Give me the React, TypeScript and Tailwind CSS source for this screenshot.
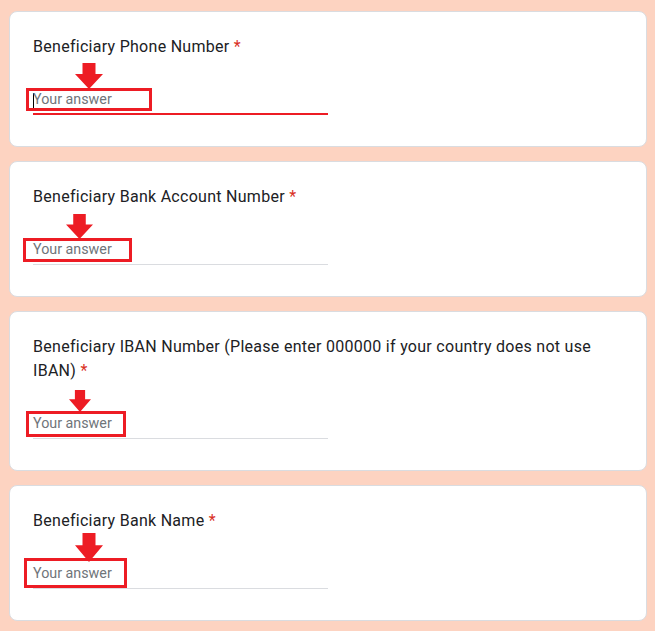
type Mark = {
  box: { left: number; top: number; width: number; height: number };
  arrow: { left: number; top: number; width: number; height: number };
};

type Question = {
  title: string;
  focused?: boolean;
  mark: Mark;
};

const questions: Question[] = [
  {
    title: 'Beneficiary Phone Number',
    focused: true,
    mark: {
      box: { left: 16, top: 76, width: 126, height: 23 },
      arrow: { left: 65, top: 51, width: 28, height: 26 },
    },
  },
  {
    title: 'Beneficiary Bank Account Number',
    mark: {
      box: { left: 13, top: 76, width: 109, height: 24 },
      arrow: { left: 56, top: 52, width: 27, height: 25 },
    },
  },
  {
    title: 'Beneficiary IBAN Number (Please enter 000000 if your country does not use IBAN)',
    mark: {
      box: { left: 16, top: 99, width: 100, height: 26 },
      arrow: { left: 59, top: 78, width: 22, height: 22 },
    },
  },
  {
    title: 'Beneficiary Bank Name',
    mark: {
      box: { left: 14, top: 72, width: 103, height: 30 },
      arrow: { left: 65, top: 47, width: 28, height: 29 },
    },
  },
];

function DownArrow({ width, height }: { width: number; height: number }) {
  // shaft is about half the head width, head takes the lower ~55%
  return (
    <svg width={width} height={height} viewBox="0 0 28 26" preserveAspectRatio="none">
      <polygon points="7.5,0 20.5,0 20.5,11 28,11 14,26 0,11 7.5,11" fill="#ed1c24" />
    </svg>
  );
}

function QuestionCard({ q }: { q: Question }) {
  const { box, arrow } = q.mark;
  return (
    <div className="relative bg-white rounded-lg border border-[#dadce0] pt-[23px] pb-[31px] px-[23px]">
      <div className="text-[16px] leading-6 tracking-[0.28px] text-[#202124]">
        {q.title}&nbsp;<span className="text-[#d93025]">*</span>
      </div>
      <div
        className={
          q.focused
            ? 'relative mt-[29px] w-[295px] h-[27px] border-b-2 border-[#ed1c24]'
            : 'relative mt-[29px] w-[295px] h-[27px] border-b border-[#dadce0]'
        }
      >
        <div className="flex items-center h-6 text-[14.3px] text-[#70757a]">
          {q.focused && <span className="inline-block w-px h-[15px] bg-black mr-[-1px]" />}
          Your answer
        </div>
      </div>

      {/* annotations drawn over the form */}
      <div
        className="absolute border-[3px] border-[#ed1c24]"
        style={{ left: box.left, top: box.top, width: box.width, height: box.height }}
      />
      <div className="absolute" style={{ left: arrow.left, top: arrow.top }}>
        <DownArrow width={arrow.width} height={arrow.height} />
      </div>
    </div>
  );
}

export default function App() {
  return (
    <div
      className="min-h-[631px] bg-[#fdd3c1] pt-[11px] pl-[9px] pr-[8px] pb-[10px] flex flex-col gap-[14px]"
      style={{ fontFamily: 'Roboto, "Noto Sans", sans-serif' }}
    >
      {questions.map(q => (
        <QuestionCard key={q.title} q={q} />
      ))}
    </div>
  );
}
